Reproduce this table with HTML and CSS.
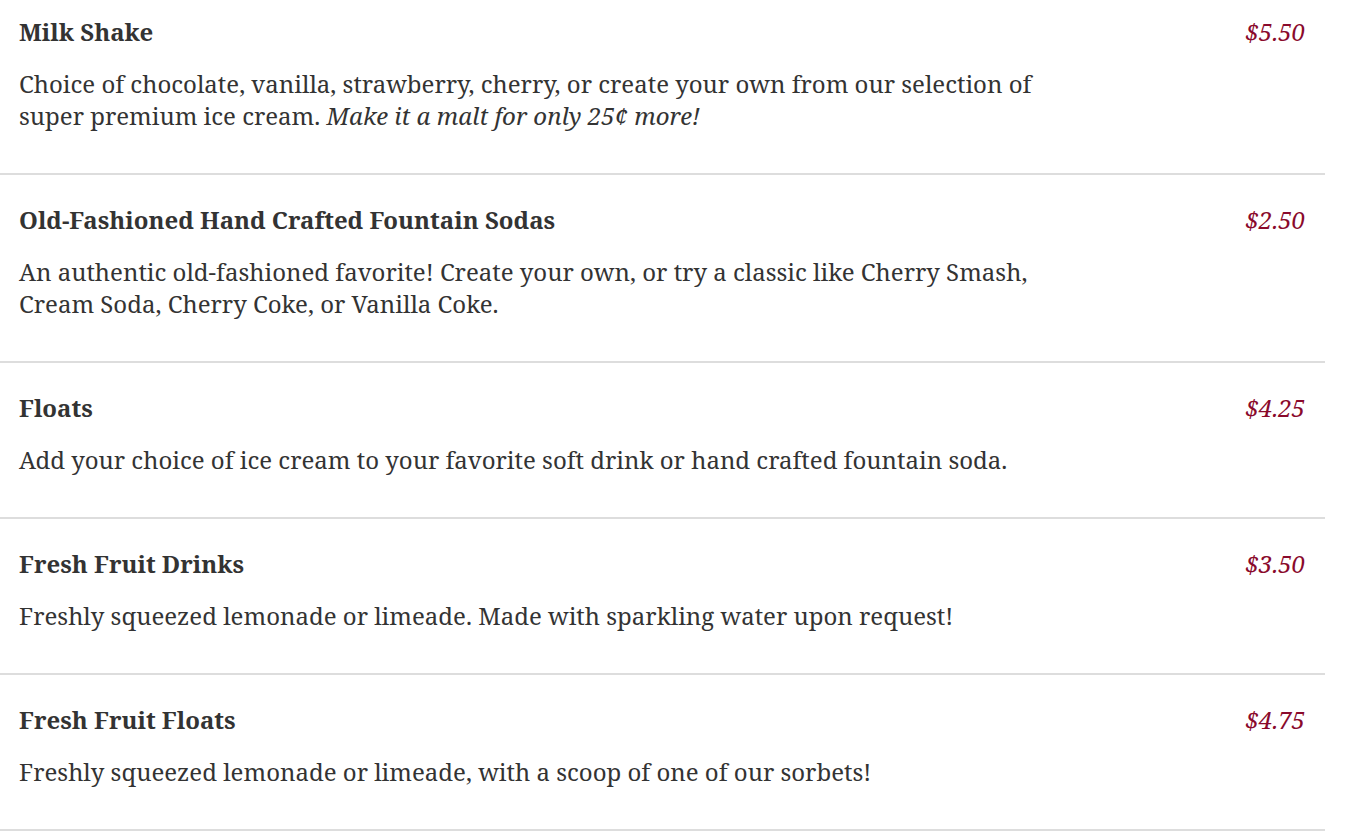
FILE: index.html
```html
<!DOCTYPE html>
<html lang="en">
<head>
<meta charset="utf-8">
<title>Drinks Menu</title>
<link rel="stylesheet" href="styles.css">
</head>
<body>
<ul class="menu">
  <li class="item">
    <div class="item-head"><h3 class="item-name">Milk Shake</h3><span class="item-price">$5.50</span></div>
    <p class="item-desc">Choice of chocolate, vanilla, strawberry, cherry, or create your own from our selection of super premium ice cream. <em>Make it a malt for only 25¢ more!</em></p>
  </li>
  <li class="item">
    <div class="item-head"><h3 class="item-name">Old-Fashioned Hand Crafted Fountain Sodas</h3><span class="item-price">$2.50</span></div>
    <p class="item-desc">An authentic old-fashioned favorite! Create your own, or try a classic like Cherry Smash, Cream Soda, Cherry Coke, or Vanilla Coke.</p>
  </li>
  <li class="item">
    <div class="item-head"><h3 class="item-name">Floats</h3><span class="item-price">$4.25</span></div>
    <p class="item-desc">Add your choice of ice cream to your favorite soft drink or hand crafted fountain soda.</p>
  </li>
  <li class="item">
    <div class="item-head"><h3 class="item-name">Fresh Fruit Drinks</h3><span class="item-price">$3.50</span></div>
    <p class="item-desc">Freshly squeezed lemonade or limeade. Made with sparkling water upon request!</p>
  </li>
  <li class="item">
    <div class="item-head"><h3 class="item-name">Fresh Fruit Floats</h3><span class="item-price">$4.75</span></div>
    <p class="item-desc">Freshly squeezed lemonade or limeade, with a scoop of one of our sorbets!</p>
  </li>
</ul>
</body>
</html>
```

FILE: styles.css
```css
html, body {
  margin: 0;
  padding: 0;
  background: #ffffff;
}

body {
  font-family: "Noto Serif", "DejaVu Serif", "Liberation Serif", serif;
  color: #333333;
  font-size: 24px;
  line-height: 32px;
}

.menu {
  list-style: none;
  margin: 0;
  padding: 0;
  width: 1325px;
}

.item {
  padding: 29px 20px 41px 19px;
  border-bottom: 2px solid #dddddd;
}

.item:first-child {
  padding-top: 16px;
}

.item-head {
  display: flex;
  justify-content: space-between;
  align-items: baseline;
}

.item-name {
  margin: 0;
  font-size: 24px;
  font-weight: 700;
  line-height: 32px;
}

.item-price {
  font-style: italic;
  color: #8a0a2c;
  font-size: 24px;
}

.item-desc {
  margin: 20px 0 0;
  max-width: 1040px;
}
```
